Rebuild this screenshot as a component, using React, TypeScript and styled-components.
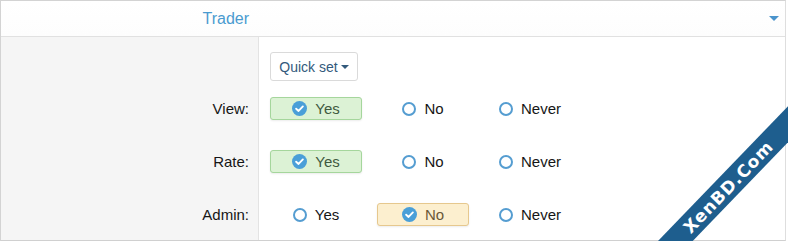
import { createGlobalStyle } from 'styled-components';
import styled from 'styled-components';

const GlobalStyle = createGlobalStyle`
  html, body {
    margin: 0;
    padding: 0;
    background: #fff;
  }
  body {
    font-family: 'Liberation Sans', Arial, sans-serif;
    color: #141414;
  }
`;

const Page = styled.div`
  position: relative;
  width: 788px;
  height: 241px;
  overflow: hidden;
  background: #fff;
`;

const Panel = styled.div`
  width: 784px;
  height: 239px;
  border: 1px solid #d3d3d3;
  border-right-color: #dedede;
  border-bottom-color: #d0d0d0;
  display: flex;
  flex-direction: column;
  overflow: hidden;
`;

const Header = styled.div`
  height: 35px;
  flex-shrink: 0;
  display: grid;
  grid-template-columns: 248px 1fr;
  align-items: center;
  border-bottom: 1px solid #e1e1e1;
  background: linear-gradient(#fff, #fdfdfd);
`;

const Title = styled.div`
  text-align: right;
  font-size: 16px;
  color: #4a9bd0;
`;

const Toggle = styled.span`
  justify-self: end;
  margin-right: 6px;
  width: 0;
  height: 0;
  border-left: 5px solid transparent;
  border-right: 5px solid transparent;
  border-top: 5px solid #4a94cc;
`;

const Row = styled.div<{ $height: number }>`
  display: grid;
  grid-template-columns: 258px 1fr;
  height: ${(p) => p.$height}px;
  flex-shrink: 0;
`;

const Label = styled.div`
  background: #f5f5f5;
  border-right: 1px solid #e3e3e3;
  padding-right: 9px;
  display: flex;
  align-items: center;
  justify-content: flex-end;
  font-size: 15px;
  color: #161616;
`;

const Filler = styled.div`
  flex: 1;
  display: grid;
  grid-template-columns: 258px 1fr;
  & > div:first-child {
    background: #f5f5f5;
    border-right: 1px solid #e3e3e3;
  }
`;

const Cell = styled.div<{ $top?: number }>`
  padding-left: 11px;
  padding-top: ${(p) => p.$top ?? 0}px;
  display: flex;
  align-items: ${(p) => (p.$top ? 'flex-start' : 'center')};
`;

const QuickSet = styled.button`
  height: 29px;
  width: 88px;
  padding: 0;
  border: 1px solid #dadada;
  border-radius: 3px;
  background: #fff;
  font-family: inherit;
  font-size: 14px;
  color: #335a7c;
  display: flex;
  align-items: center;
  justify-content: center;
  gap: 3px;
`;

const SmallCaret = styled.span`
  width: 0;
  height: 0;
  border-left: 4px solid transparent;
  border-right: 4px solid transparent;
  border-top: 4px solid #335a7c;
`;

const Options = styled.div`
  display: grid;
  grid-template-columns: repeat(3, 92px);
  column-gap: 15px;
`;

type Tone = 'yes' | 'no';

const Choice = styled.div<{ $on: boolean; $tone: Tone }>`
  height: 21px;
  display: flex;
  align-items: center;
  justify-content: center;
  gap: 8px;
  font-size: 15px;
  border-radius: 3px;
  border: 1px solid
    ${(p) => (!p.$on ? 'transparent' : p.$tone === 'yes' ? '#a5d69c' : '#e6c88e')};
  background: ${(p) => (!p.$on ? 'transparent' : p.$tone === 'yes' ? '#dcf2d5' : '#fcefcf')};
  box-shadow: ${(p) => (p.$on ? '0 1px 2px rgba(0,0,0,0.08)' : 'none')};
  color: ${(p) => (!p.$on ? '#161616' : p.$tone === 'yes' ? '#3f5a40' : '#6a5838')};
`;

const Ring = styled.span`
  width: 10px;
  height: 10px;
  border: 2px solid #559dd1;
  border-radius: 50%;
`;

const Ribbon = styled.div`
  position: absolute;
  left: 578px;
  top: 174px;
  width: 300px;
  height: 25px;
  background: #1e5e8e;
  color: #fff;
  font-family: 'DejaVu Sans', sans-serif;
  font-weight: bold;
  font-size: 17px;
  letter-spacing: 1px;
  display: flex;
  align-items: center;
  justify-content: center;
  transform: rotate(-46deg);
`;

const Check = () => (
  <svg width="15" height="15" viewBox="0 0 16 16">
    <circle cx="8" cy="8" r="8" fill="#4a9fd8" />
    <path d="M4.4 8.2 L7 10.6 L11.6 5.8" fill="none" stroke="#fff" strokeWidth="2" strokeLinecap="round" strokeLinejoin="round" />
  </svg>
);

const values = ['Yes', 'No', 'Never'];

const permissions: { label: string; value: number }[] = [
  { label: 'View:', value: 0 },
  { label: 'Rate:', value: 0 },
  { label: 'Admin:', value: 1 },
];

const App = () => (
  <>
    <GlobalStyle />
    <Page>
      <Panel>
        <Header>
          <Title>Trader</Title>
          <Toggle />
        </Header>
        <Row $height={45}>
          <Label />
          <Cell $top={15}>
            <QuickSet>
              Quick set <SmallCaret />
            </QuickSet>
          </Cell>
        </Row>
        {permissions.map((perm) => (
          <Row $height={53} key={perm.label}>
            <Label>{perm.label}</Label>
            <Cell>
              <Options>
                {values.map((v, i) => {
                  const on = perm.value === i;
                  return (
                    <Choice key={v} $on={on} $tone={i === 0 ? 'yes' : 'no'}>
                      {on ? <Check /> : <Ring />}
                      {v}
                    </Choice>
                  );
                })}
              </Options>
            </Cell>
          </Row>
        ))}
        <Filler>
          <div />
          <div />
        </Filler>
      </Panel>
      <Ribbon>XenBD.Com</Ribbon>
    </Page>
  </>
);

export default App;
